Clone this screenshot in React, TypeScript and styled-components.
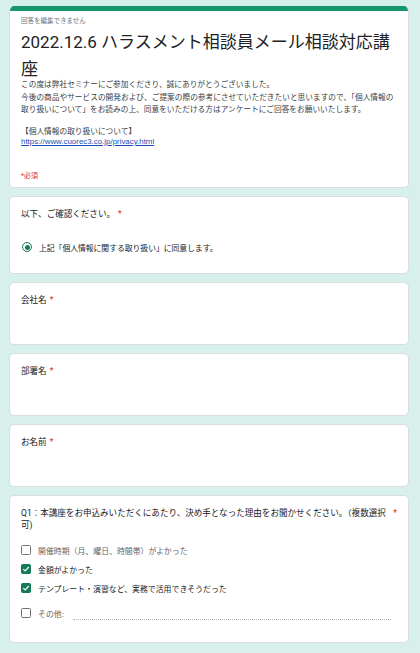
import React from 'react';
import styled, { createGlobalStyle } from 'styled-components';

const GlobalStyle = createGlobalStyle`
    html, body {
        margin: 0;
        padding: 0;
        background-color: #d8f0eb;
    }
    body {
        font-family: Roboto, "Noto Sans CJK JP", sans-serif;
        color: #202124;
    }
`

const options = [
    { label: '開催時期（月、曜日、時間帯）がよかった', checked: false },
    { label: '金額がよかった', checked: true },
    { label: 'テンプレート・演習など、実務で活用できそうだった', checked: true },
]

const textQuestions = ['会社名', '部署名', 'お名前']

const CheckMark = () => (
    <svg width="8" height="8" viewBox="0 0 8 8">
        <path d="M1.3 4.1 L3.2 6 L6.8 2" fill="none" stroke="#fff" strokeWidth="1.2" />
    </svg>
)

const App = () => {
    return (
        <Page>
            <GlobalStyle />
            <HeaderCard>
                <TopBar />
                <HeaderBody>
                    <Notice>回答を編集できません</Notice>
                    <FormTitle>2022.12.6 ハラスメント相談員メール相談対応講座</FormTitle>
                    <Description>
                        この度は弊社セミナーにご参加くださり、誠にありがとうございました。<br />
                        今後の商品やサービスの開発および、ご提案の際の参考にさせていただきたいと思いますので、「個人情報の取り扱いについて」をお読みの上、同意をいただける方はアンケートにご回答をお願いいたします。
                    </Description>
                    <PrivacyHead>【個人情報の取り扱いについて】</PrivacyHead>
                    <PrivacyLink href="#">https://www.cuorec3.co.jp/privacy.html</PrivacyLink>
                    <RequiredNote>*必須</RequiredNote>
                </HeaderBody>
            </HeaderCard>

            <QuestionCard>
                <QuestionTitle>
                    <QuestionText>以下、ご確認ください。</QuestionText>
                    <Asterisk>*</Asterisk>
                </QuestionTitle>
                <RadioRow>
                    <RadioOuter><RadioDot /></RadioOuter>
                    <RadioLabel>上記「個人情報に関する取り扱い」に同意します。</RadioLabel>
                </RadioRow>
            </QuestionCard>

            {textQuestions.map((q) => (
                <QuestionCard key={q} bottom={12}>
                    <QuestionTitle>
                        <QuestionText>{q}</QuestionText>
                        <Asterisk>*</Asterisk>
                    </QuestionTitle>
                    <AnswerSpace />
                </QuestionCard>
            ))}

            <QuestionCard bottom={21}>
                <QuestionTitle>
                    <QuestionText>Q1：本講座をお申込みいただくにあたり、決め手となった理由をお聞かせください。（複数選択可)</QuestionText>
                    <Asterisk>*</Asterisk>
                </QuestionTitle>
                <OptionList>
                    {options.map((o) => (
                        <OptionRow key={o.label}>
                            <CheckBox checked={o.checked}>{o.checked ? <CheckMark /> : null}</CheckBox>
                            <OptionLabel checked={o.checked}>{o.label}</OptionLabel>
                        </OptionRow>
                    ))}
                    <OtherRow>
                        <CheckBox checked={false} />
                        <OptionLabel checked={false}>その他:</OptionLabel>
                        <OtherInput />
                    </OtherRow>
                </OptionList>
            </QuestionCard>
        </Page>
    )
}

const Page = styled.div`
    display: flex;
    flex-direction: column;
    gap: 8px;
    padding: 6px 11px 20px 9px;
`

const HeaderCard = styled.div`
    background-color: #fff;
    border: 1px solid #dadce0;
    border-top: none;
    border-radius: 5px;
    overflow: hidden;
    height: 182px;
    box-sizing: border-box;
`

const TopBar = styled.div`
    height: 5px;
    background-color: #14956b;
`

const HeaderBody = styled.div`
    padding: 5px 11px 0 11px;
    display: flex;
    flex-direction: column;
`

const Notice = styled.div`
    font-size: 6.5px;
    line-height: 10px;
    color: #70757a;
`

const FormTitle = styled.h1`
    margin: 3px 0 0 0;
    font-size: 17px;
    line-height: 27px;
    font-weight: 400;
    color: #202124;
`

const Description = styled.div`
    margin-top: -4px;
    font-size: 7.7px;
    line-height: 12.5px;
    color: #3c4043;
`

const PrivacyHead = styled.div`
    margin-top: 10px;
    font-size: 7.7px;
    line-height: 10.5px;
    color: #3c4043;
`

const PrivacyLink = styled.a`
    font-family: "Liberation Sans", Arial, sans-serif;
    font-size: 7.9px;
    line-height: 10.5px;
    color: #1a4fb5;
    text-decoration: underline;
    align-self: flex-start;
`

const RequiredNote = styled.div`
    margin-top: 23px;
    font-size: 7px;
    line-height: 10px;
    color: #d93025;
`

const QuestionCard = styled.div<{ bottom?: number }>`
    background-color: #fff;
    border: 1px solid #dadce0;
    border-radius: 5px;
    padding: 11px 11px ${(p) => p.bottom ?? 19}px 11px;
    display: flex;
    flex-direction: column;
`

const QuestionTitle = styled.div`
    display: flex;
    align-items: flex-start;
    font-size: 8.55px;
    line-height: 12px;
    color: #202124;
`

const QuestionText = styled.span`
    min-width: 0;
`

const Asterisk = styled.span`
    color: #d93025;
    padding-left: 3px;
    flex-shrink: 0;
`

const RadioRow = styled.div`
    display: flex;
    align-items: center;
    gap: 7px;
    margin-top: 20px;
    height: 14px;
    padding-left: 1px;
`

const RadioOuter = styled.div`
    width: 10px;
    height: 10px;
    border-radius: 50%;
    border: 1.5px solid #137a5a;
    box-sizing: border-box;
    display: flex;
    align-items: center;
    justify-content: center;
`

const RadioDot = styled.div`
    width: 5px;
    height: 5px;
    border-radius: 50%;
    background-color: #137a5a;
`

const RadioLabel = styled.span`
    font-size: 7.8px;
    color: #202124;
`

const AnswerSpace = styled.div`
    height: 26px;
`

const OptionList = styled.div`
    display: flex;
    flex-direction: column;
    gap: 3px;
    margin-top: 11px;
`

const OptionRow = styled.div`
    display: flex;
    align-items: center;
    gap: 7px;
    height: 16px;
`

const OtherRow = styled(OptionRow)`
    margin-top: 6px;
`

const CheckBox = styled.div<{ checked: boolean }>`
    width: 10px;
    height: 10px;
    box-sizing: border-box;
    border-radius: 1.5px;
    border: 1.3px solid ${(p) => (p.checked ? '#137a5a' : '#6f7377')};
    background-color: ${(p) => (p.checked ? '#137a5a' : '#fff')};
    display: flex;
    align-items: center;
    justify-content: center;
    flex-shrink: 0;
`

const OptionLabel = styled.span<{ checked: boolean }>`
    font-size: 7.9px;
    color: ${(p) => (p.checked ? '#202124' : '#5f6368')};
    white-space: nowrap;
`

const OtherInput = styled.div`
    flex: 1;
    align-self: flex-end;
    margin: 0 6px 1px 2px;
    border-bottom: 1px dotted #b0b4b8;
`

export default App
